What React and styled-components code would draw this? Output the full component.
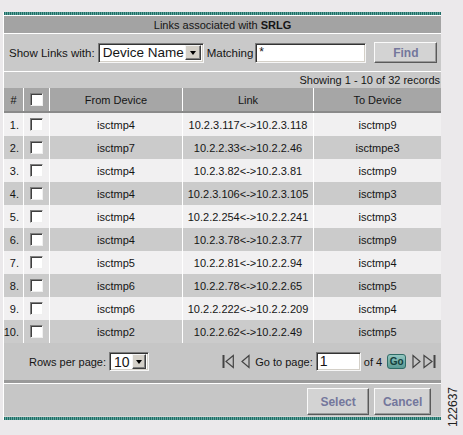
import React from 'react';
import styled, { createGlobalStyle } from 'styled-components';

const GlobalStyle = createGlobalStyle`
  body {
    margin: 0;
    background: #ebe9eb;
    font-family: "Liberation Sans", Arial, sans-serif;
    font-size: 11px;
    color: #151515;
  }
`

const Page = styled.div`
  display: flex;
  flex-direction: row;
  align-items: flex-start;
  padding: 12px 0 0 3px;
`

const Panel = styled.div`
  width: 440px;
  background: #ffffff;
  border-left: 1px solid #ffffff;
  display: flex;
  flex-direction: column;
`

const TealLine = styled.div`
  height: 3px;
  background: repeating-linear-gradient(90deg, #1f6d66 0 1px, #5fa39b 1px 2px);
  margin-bottom: ${p => p.gap || 0}px;
`

const TitleBar = styled.div`
  height: 17px;
  background: #a3a3a3;
  display: flex;
  align-items: center;
  justify-content: center;
  margin-bottom: 1px;
  b { margin-left: 3px; }
`

const SearchRow = styled.div`
  height: 37px;
  background: #c9c9c9;
  display: flex;
  align-items: center;
  padding-left: 5px;
  margin-bottom: 1px;
  font-size: 11.5px;
`

const Label = styled.span`
  margin-right: ${p => p.mr || 0}px;
  white-space: nowrap;
`

const SelectBox = styled.div`
  box-sizing: border-box;
  flex: none;
  width: ${p => p.w}px;
  height: ${p => p.h || 20}px;
  display: flex;
  align-items: center;
  background: #ffffff;
  border: 1px solid;
  border-color: #7b7b7b #f6f6f6 #f6f6f6 #7b7b7b;
  box-shadow: inset 1px 1px 0 #333, inset -1px -1px 0 #d4d0c8;
  padding: 0 2px 0 4px;
  margin-right: ${p => p.mr || 0}px;
  font-size: ${p => p.fs || 14}px;
`

const SelectValue = styled.span`
  flex: 1;
  white-space: nowrap;
`

const ArrowButton = styled.div`
  width: ${p => p.w || 14}px;
  height: 15px;
  box-sizing: border-box;
  background: #d4d0c8;
  border: 1px solid;
  border-color: #f4f4f4 #404040 #404040 #f4f4f4;
  box-shadow: inset -1px -1px 0 #808080;
  display: flex;
  align-items: center;
  justify-content: center;
  &::after {
    content: '';
    border-left: 3px solid transparent;
    border-right: 3px solid transparent;
    border-top: 4px solid #000;
  }
`

const TextInput = styled.div`
  box-sizing: border-box;
  flex: none;
  width: ${p => p.w}px;
  height: ${p => p.h || 20}px;
  background: #ffffff;
  border: 1px solid;
  border-color: #7b7b7b #f6f6f6 #f6f6f6 #7b7b7b;
  box-shadow: inset 1px 1px 0 #333, inset -1px -1px 0 #d4d0c8;
  padding: 1px 3px;
  margin-right: ${p => p.mr || 0}px;
  font-size: ${p => p.fs || 12}px;
  line-height: ${p => p.lh || 14}px;
`

const Button = styled.div`
  box-sizing: border-box;
  flex: none;
  width: ${p => p.w}px;
  height: ${p => p.h || 27}px;
  background: #d3d3d3;
  border: 1px solid;
  border-color: #fafafa #5a5a5a #5a5a5a #fafafa;
  box-shadow: inset -1px -1px 0 #9a9a9a;
  display: flex;
  align-items: center;
  justify-content: center;
  font-weight: bold;
  font-size: 12px;
  color: #74779c;
`

const ShowingRow = styled.div`
  height: 16px;
  background: #c9c9c9;
  display: flex;
  align-items: center;
  justify-content: flex-end;
  padding-right: 1px;
`

const GridRow = styled.div`
  display: grid;
  grid-template-columns: 20px 26px 133px 131px 1fr;
  height: ${p => p.h || 23}px;
  background: ${p => p.bg};
  border-bottom: ${p => p.header ? '2px solid #8a8a8a' : 'none'};
`

const Cell = styled.div`
  display: flex;
  align-items: center;
  justify-content: ${p => p.align || 'center'};
  padding-right: ${p => p.pr || 0}px;
  border-right: 1px solid #ffffff;
  white-space: nowrap;
  &:last-child { border-right: none; }
`

const Check = styled.div`
  box-sizing: border-box;
  width: 13px;
  height: 13px;
  background: #ffffff;
  border: 1px solid;
  border-color: #808080 #f0f0f0 #f0f0f0 #808080;
  box-shadow: inset 1px 1px 0 #404040;
`

const Footer = styled.div`
  height: 37px;
  background: #c6c6c6;
  display: flex;
  align-items: center;
  justify-content: space-between;
  padding: 0 5px 0 25px;
  border-bottom: 3px solid #9a9a9a;
  margin-bottom: 1px;
`

const Group = styled.div`
  display: flex;
  align-items: center;
`

const IconBtn = styled.svg`
  display: block;
  flex: none;
  margin-right: ${p => p.mr || 0}px;
`

const GoButton = styled.div`
  box-sizing: border-box;
  width: 19px;
  height: 15px;
  border-radius: 3px;
  border: 1px solid #2f6b66;
  background: linear-gradient(#93c6c0, #5a9a94);
  color: #143f3c;
  font-weight: bold;
  font-size: 10px;
  display: flex;
  align-items: center;
  justify-content: center;
  margin-right: 6px;
`

const ButtonRow = styled.div`
  height: 33px;
  background: #c6c6c6;
  display: flex;
  align-items: flex-start;
  justify-content: flex-end;
  gap: 5px;
  padding: 4px 10px 0 0;
  box-sizing: border-box;
  border-bottom: 1px solid #d8d8d8;
`

const Side = styled.div`
  width: 20px;
  display: flex;
  flex-direction: column;
  align-items: center;
  padding: 375px 0 0 2px;
`

const FigureNo = styled.div`
  writing-mode: vertical-rl;
  transform: rotate(180deg);
  font-size: 12px;
  line-height: 14px;
  color: #222;
`

const rows = [
  ['isctmp4', '10.2.3.117<->10.2.3.118', 'isctmp9'],
  ['isctmp7', '10.2.2.33<->10.2.2.46', 'isctmpe3'],
  ['isctmp4', '10.2.3.82<->10.2.3.81', 'isctmp9'],
  ['isctmp4', '10.2.3.106<->10.2.3.105', 'isctmp3'],
  ['isctmp4', '10.2.2.254<->10.2.2.241', 'isctmp3'],
  ['isctmp4', '10.2.3.78<->10.2.3.77', 'isctmp9'],
  ['isctmp5', '10.2.2.81<->10.2.2.94', 'isctmp4'],
  ['isctmp6', '10.2.2.78<->10.2.2.65', 'isctmp5'],
  ['isctmp6', '10.2.2.222<->10.2.2.209', 'isctmp4'],
  ['isctmp2', '10.2.2.62<->10.2.2.49', 'isctmp5'],
]

const First = () => (
  <IconBtn width="12" height="15" viewBox="0 0 12 15" mr={7}>
    <rect x="0.5" y="1" width="2" height="13" fill="#444" />
    <polygon points="11.3,1.5 4,7.5 11.3,13.5" fill="none" stroke="#444" strokeWidth="1.2" />
  </IconBtn>
)

const Prev = () => (
  <IconBtn width="9" height="15" viewBox="0 0 9 15" mr={5}>
    <polygon points="8,1.5 1,7.5 8,13.5" fill="none" stroke="#444" strokeWidth="1.2" />
  </IconBtn>
)

const Next = () => (
  <IconBtn width="9" height="15" viewBox="0 0 9 15" mr={2}>
    <polygon points="1,1.5 8,7.5 1,13.5" fill="none" stroke="#444" strokeWidth="1.2" />
  </IconBtn>
)

const Last = () => (
  <IconBtn width="13" height="15" viewBox="0 0 13 15">
    <polygon points="1,1.5 9,7.5 1,13.5" fill="none" stroke="#444" strokeWidth="1.2" />
    <rect x="10.5" y="1" width="2" height="13" fill="#444" />
  </IconBtn>
)

const App = () => {
  return (
    <Page>
      <GlobalStyle />
      <Panel>
        <TealLine gap={1} />
        <TitleBar>Links associated with<b>SRLG</b></TitleBar>
        <SearchRow>
          <Label mr={3}>Show Links with:</Label>
          <SelectBox w={106} mr={3} fs={13.5}>
            <SelectValue>Device Name</SelectValue>
            <ArrowButton w={16} />
          </SelectBox>
          <Label mr={2}>Matching</Label>
          <TextInput w={111} mr={8}>*</TextInput>
          <Button w={63} h={21}>Find</Button>
        </SearchRow>
        <ShowingRow>Showing 1 - 10 of 32 records</ShowingRow>
        <GridRow header h={23} bg="#a6a6a6">
          <Cell>#</Cell>
          <Cell><Check /></Cell>
          <Cell>From Device</Cell>
          <Cell>Link</Cell>
          <Cell>To Device</Cell>
        </GridRow>
        {rows.map((r, i) => (
          <GridRow key={i} bg={i % 2 === 0 ? '#f1f0f1' : '#cbcbcb'}>
            <Cell align="flex-end" pr={4}>{i + 1}.</Cell>
            <Cell><Check /></Cell>
            <Cell>{r[0]}</Cell>
            <Cell>{r[1]}</Cell>
            <Cell>{r[2]}</Cell>
          </GridRow>
        ))}
        <Footer>
          <Group>
            <Label mr={3}>Rows per page:</Label>
            <SelectBox w={40} h={19}>
              <SelectValue>10</SelectValue>
              <ArrowButton />
            </SelectBox>
          </Group>
          <Group>
            <First />
            <Prev />
            <Label mr={3}>Go to page:</Label>
            <TextInput w={45} h={19} mr={3} fs={14} lh={15}>1</TextInput>
            <Label mr={5}>of 4</Label>
            <GoButton>Go</GoButton>
            <Next />
            <Last />
          </Group>
        </Footer>
        <ButtonRow>
          <Button w={62}>Select</Button>
          <Button w={57}>Cancel</Button>
        </ButtonRow>
        <TealLine />
      </Panel>
      <Side>
        <FigureNo>122637</FigureNo>
      </Side>
    </Page>
  )
}

export default App
